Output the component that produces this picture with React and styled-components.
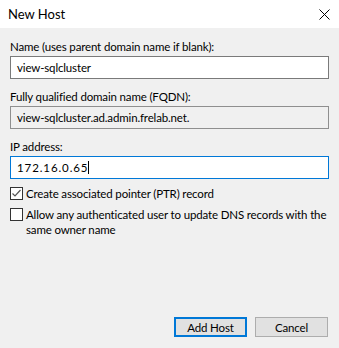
import React from "react";
import styled, { createGlobalStyle } from "styled-components";

const Global = createGlobalStyle`
  html, body {
    margin: 0;
    padding: 0;
    background: #f0f0f0;
  }
  body {
    font-family: Lato, "Liberation Sans", Arial, sans-serif;
    font-size: 11.5px;
    letter-spacing: -0.15px;
    color: #000;
  }
`;

const Window = styled.div`
  width: 339px;
  height: 348px;
  display: flex;
  flex-direction: column;
  background: #f0f0f0;
`;

const TitleBar = styled.div`
  height: 28px;
  background: #fff;
  display: flex;
  align-items: center;
  justify-content: space-between;
  padding: 0 9px 0 8px;
`;

const Title = styled.div`
  font-size: 13px;
  letter-spacing: 0;
  color: #000;
  margin-top: -1px;
`;

const Body = styled.div`
  flex: 1;
  display: flex;
  flex-direction: column;
  padding: 12px 10px 11px 10px;
`;

const Label = styled.div`
  line-height: 14px;
  margin-bottom: 2px;
`;

const Field = styled.div`
  box-sizing: border-box;
  height: 23px;
  display: flex;
  align-items: center;
  padding-left: 6px;
  border: 1px solid ${(p) => (p.$focused ? "#0078d7" : p.$readOnly ? "#8f8f8f" : "#7a7a7a")};
  background: ${(p) => (p.$readOnly ? "#f0f0f0" : "#fff")};
  margin-bottom: ${(p) => (p.$focused ? "8px" : "11px")};
  letter-spacing: ${(p) => (p.$ip ? "0.9px" : "-0.15px")};
`;

const Caret = styled.span`
  display: inline-block;
  width: 1px;
  height: 13px;
  background: #000;
`;

const CheckRow = styled.div`
  display: flex;
  align-items: flex-start;
  gap: 3px;
  margin-bottom: 7px;
`;

const Box = styled.div`
  box-sizing: border-box;
  width: 13px;
  height: 13px;
  flex: 0 0 13px;
  border: 1px solid #333;
  background: #fff;
  display: flex;
  align-items: center;
  justify-content: center;
`;

const CheckText = styled.div`
  line-height: 15px;
  margin-top: -1px;
`;

const Spacer = styled.div`
  flex: 1;
`;

const Buttons = styled.div`
  display: flex;
  justify-content: flex-end;
  gap: 8px;
  padding-right: 1px;
`;

const Button = styled.div`
  box-sizing: border-box;
  width: 73px;
  height: 20px;
  display: flex;
  align-items: center;
  justify-content: center;
  background: #e1e1e1;
  border: ${(p) => (p.$default ? "2px solid #0078d7" : "1px solid #adadad")};
`;

const Check = () => (
  <svg width="11" height="11" viewBox="0 0 11 11">
    <path d="M1.5 5.5 L4 8 L9.5 2" fill="none" stroke="#555" strokeWidth="1.2" />
  </svg>
);

const Close = () => (
  <svg width="11" height="11" viewBox="0 0 11 11">
    <path d="M0.5 0.5 L10.5 10.5 M10.5 0.5 L0.5 10.5" stroke="#000" strokeWidth="1" />
  </svg>
);

export default function App() {
  return (
    <Window>
      <Global />
      <TitleBar>
        <Title>New Host</Title>
        <Close />
      </TitleBar>
      <Body>
        <Label>Name (uses parent domain name if blank):</Label>
        <Field>view-sqlcluster</Field>
        <Label>Fully qualified domain name (FQDN):</Label>
        <Field $readOnly>view-sqlcluster.ad.admin.frelab.net.</Field>
        <Label>IP address:</Label>
        <Field $focused $ip>
          172.16.0.65
          <Caret />
        </Field>
        <CheckRow>
          <Box>
            <Check />
          </Box>
          <CheckText>Create associated pointer (PTR) record</CheckText>
        </CheckRow>
        <CheckRow>
          <Box />
          <CheckText>
            Allow any authenticated user to update DNS records with the
            <br />
            same owner name
          </CheckText>
        </CheckRow>
        <Spacer />
        <Buttons>
          <Button $default>Add Host</Button>
          <Button>Cancel</Button>
        </Buttons>
      </Body>
    </Window>
  );
}
